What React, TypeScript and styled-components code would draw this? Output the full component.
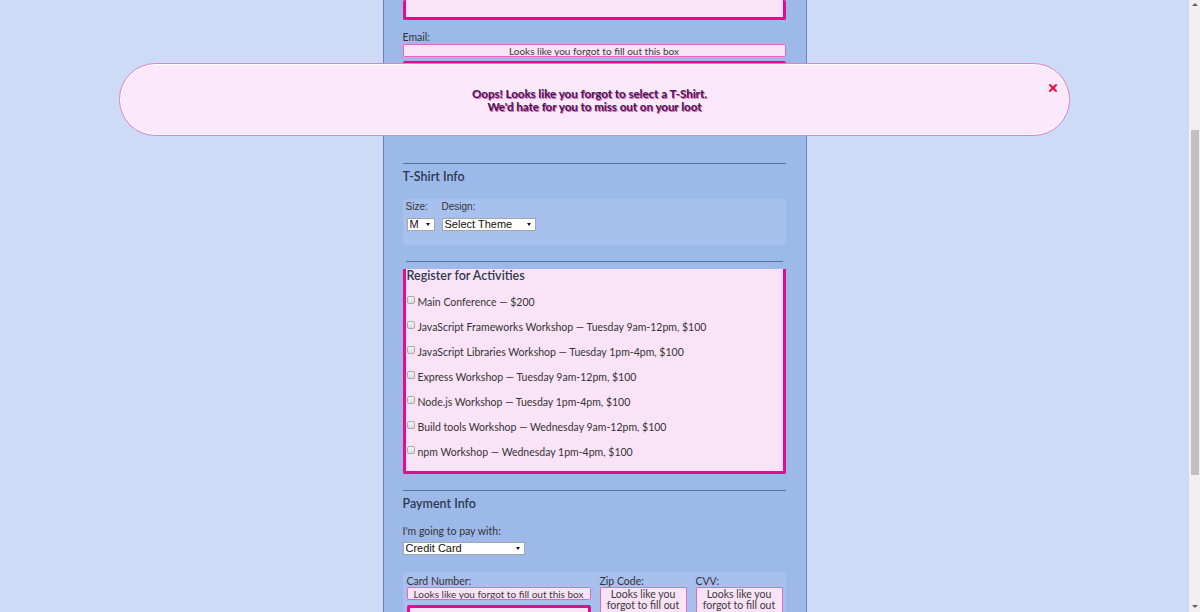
import React from "react";
import styled, { createGlobalStyle } from "styled-components";
import { X } from "lucide-react";

const Global = createGlobalStyle`
  html, body { margin: 0; padding: 0; height: 612px; overflow: hidden; }
  body { background: #cddbf6; font-family: "Lato", "Noto Sans", sans-serif; color: #333; }
  * { box-sizing: border-box; }
`;

const Page = styled.div`
  display: flex;
  height: 612px;
  width: 1200px;
`;

const Main = styled.main`
  position: relative;
  flex: 1;
  height: 100%;
  overflow: hidden;
`;

const ScrollTrack = styled.div`
  width: 11px;
  height: 100%;
  background: #f0f0f0;
  display: flex;
  flex-direction: column;
  align-items: center;
  padding-top: 3px;
`;

const ScrollArrow = styled.div<{ $down?: boolean }>`
  width: 0;
  height: 0;
  border-left: 3px solid transparent;
  border-right: 3px solid transparent;
  ${(p) => (p.$down ? "border-top: 3px solid #606060;" : "border-bottom: 3px solid #606060;")}
  ${(p) => (p.$down ? "margin-top: auto; margin-bottom: 4px;" : "")}
`;

const ScrollThumb = styled.div`
  width: 8px;
  height: 345px;
  margin-top: 124px;
  background: #c1c1c1;
`;

const Form = styled.form`
  width: 424px;
  height: 100%;
  margin: 0 auto;
  background: #9db9ea;
  border-left: 1px solid #6584b5;
  border-right: 1px solid #6584b5;
  padding: 0 20px 0 19px;
  display: flex;
  flex-direction: column;
  & > * { flex-shrink: 0; }
`;

const ErrorBox = styled.div<{ $h: number; $top?: boolean; $mt?: number }>`
  height: ${(p) => p.$h}px;
  margin-top: ${(p) => p.$mt ?? 0}px;
  background: #fbe3f7;
  border: 3px solid #ea0a8c;
  ${(p) => (p.$top ? "border-top: none;" : "")}
  border-radius: 2px;
  flex-shrink: 0;
`;

const Label = styled.label<{ $mt?: number; $lh?: number }>`
  display: block;
  font-size: 10.5px;
  line-height: ${(p) => p.$lh ?? 13}px;
  height: ${(p) => p.$lh ?? 13}px;
  color: #333;
  margin-top: ${(p) => p.$mt ?? 0}px;
  white-space: nowrap;
`;

const ErrorInput = styled.input`
  display: block;
  width: 100%;
  height: 13px;
  margin: 0;
  padding: 0;
  border: 1px solid #e46ab9;
  border-radius: 2px;
  background: #fbe3f7;
  font-family: "Lato", sans-serif;
  font-size: 10px;
  line-height: 11px;
  text-align: center;
  flex-shrink: 0;
  &::placeholder { color: #3a3a3a; opacity: 1; }
`;

const ErrorArea = styled.div`
  height: 30px;
  border: 1px solid #e46ab9;
  border-bottom: none;
  border-radius: 2px 2px 0 0;
  background: #fbe3f7;
  font-size: 10.5px;
  line-height: 11px;
  text-align: center;
  color: #3a3a3a;
  padding: 1px 2px 0;
  flex-shrink: 0;
`;

const Rule = styled.hr<{ $mt: number; $inset?: number }>`
  margin: ${(p) => p.$mt}px ${(p) => p.$inset ?? 0}px 0;
  border: none;
  border-top: 1px solid #53729f;
  height: 0;
`;

const Heading = styled.h3<{ $mt?: number }>`
  margin: ${(p) => p.$mt ?? 0}px 0 0;
  font-size: 12.5px;
  line-height: 16px;
  font-weight: 600;
  color: #2b3a4f;
`;

const Panel = styled.div<{ $mt: number; $h: number }>`
  margin-top: ${(p) => p.$mt}px;
  height: ${(p) => p.$h}px;
  background: #a8c0ee;
  border-radius: 3px;
  padding: 2px 3px 0 3px;
  display: flex;
  gap: 7px;
`;

const Field = styled.div<{ $w?: number }>`
  display: flex;
  flex-direction: column;
  ${(p) => (p.$w ? `width: ${p.$w}px;` : "")}
  flex-shrink: 0;
`;

const ArialLabel = styled.span`
  font-family: "Liberation Sans", Arial, sans-serif;
  font-size: 10px;
  line-height: 12px;
  color: #333;
`;

const SelectWrap = styled.div<{ $w: number; $mt?: number; $ml?: number }>`
  position: relative;
  width: ${(p) => p.$w}px;
  height: 13px;
  margin-top: ${(p) => p.$mt ?? 0}px;
  margin-left: ${(p) => p.$ml ?? 0}px;
  &::after {
    content: "";
    position: absolute;
    right: 5px;
    top: 5px;
    border-left: 2.5px solid transparent;
    border-right: 2.5px solid transparent;
    border-top: 3px solid #111;
    pointer-events: none;
  }
`;

const Select = styled.select`
  appearance: none;
  -webkit-appearance: none;
  display: block;
  width: 100%;
  height: 13px;
  margin: 0;
  padding: 0 0 0 2px;
  border: 1px solid #a6a6a6;
  border-radius: 0;
  background: #fff;
  font-family: "Liberation Sans", Arial, sans-serif;
  font-size: 11px;
  line-height: 11px;
  color: #111;
`;

const Activities = styled.fieldset`
  margin: 7px 0 0;
  height: 205px;
  background: #fbe3f7;
  border: 3px solid #ea0a8c;
  border-top: none;
  border-radius: 0 0 2px 2px;
  padding: 0 0 0 1px;
  min-width: 0;
`;

const ActHeading = styled.div`
  font-size: 12.5px;
  line-height: 13px;
  font-weight: 600;
  color: #2b3a4f;
`;

const ActList = styled.div`
  margin-top: 7px;
  display: flex;
  flex-direction: column;
`;

const ActRow = styled.label`
  display: flex;
  align-items: center;
  height: 25px;
  font-size: 10.5px;
  color: #333;
  gap: 3px;
`;

const Check = styled.span`
  width: 8px;
  height: 8px;
  margin-top: -4px;
  border: 1px solid #a9a9a9;
  border-radius: 2px;
  background: linear-gradient(#f4f4f4, #dcdcdc);
  flex-shrink: 0;
`;

const PayPanel = styled.div`
  margin-top: 17px;
  flex: 1;
  background: #a8c0ee;
  border-radius: 3px 3px 0 0;
  padding: 3px 3px 0 4px;
  display: flex;
  gap: 9px;
`;

const Modal = styled.div`
  position: absolute;
  top: 63px;
  left: 10%;
  width: 80%;
  height: 73px;
  border-radius: 37px;
  background: #fbe8fb;
  border: 1px solid #e67ccb;
  box-shadow: inset 0 0 0 1px #fff;
  display: flex;
  align-items: center;
  justify-content: center;
`;

const ModalText = styled.p`
  margin: 0;
  text-align: center;
  font-weight: 700;
  font-size: 11.5px;
  line-height: 13px;
  color: #3b1c4e;
  text-shadow: 1px 1px 0 #ef5ab6;
`;

const FirstLine = styled.span`
  padding-right: 10px;
`;

const Close = styled.button`
  position: absolute;
  top: 18px;
  right: 10px;
  width: 12px;
  height: 12px;
  padding: 0;
  border: none;
  background: none;
  display: flex;
  color: #f20a3a;
`;

const activities = [
  "Main Conference — $200",
  "JavaScript Frameworks Workshop — Tuesday 9am-12pm, $100",
  "JavaScript Libraries Workshop — Tuesday 1pm-4pm, $100",
  "Express Workshop — Tuesday 9am-12pm, $100",
  "Node.js Workshop — Tuesday 1pm-4pm, $100",
  "Build tools Workshop — Wednesday 9am-12pm, $100",
  "npm Workshop — Wednesday 1pm-4pm, $100",
];

const PH = "Looks like you forgot to fill out this box";

export default function App() {
  return (
    <Page>
      <Global />
      <Main>
        <Form onSubmit={(e) => e.preventDefault()}>
          <ErrorBox $h={20} $top />
          <Label $mt={11}>Email:</Label>
          <ErrorInput placeholder={PH} />
          <ErrorBox $h={60} $mt={4} />
          <Rule $mt={42} />
          <Heading $mt={5}>T-Shirt Info</Heading>
          <Panel $mt={14} $h={46}>
            <Field>
              <ArialLabel>Size:</ArialLabel>
              <SelectWrap $w={28} $mt={5} $ml={1}>
                <Select defaultValue="M">
                  <option>S</option>
                  <option>M</option>
                  <option>L</option>
                </Select>
              </SelectWrap>
            </Field>
            <Field>
              <ArialLabel>Design:</ArialLabel>
              <SelectWrap $w={94} $mt={5}>
                <Select defaultValue="Select Theme">
                  <option>Select Theme</option>
                </Select>
              </SelectWrap>
            </Field>
          </Panel>
          <Rule $mt={16} $inset={3} />
          <Activities>
            <ActHeading>Register for Activities</ActHeading>
            <ActList>
              {activities.map((a) => (
                <ActRow key={a}>
                  <Check role="checkbox" aria-checked="false" />
                  <span>{a}</span>
                </ActRow>
              ))}
            </ActList>
          </Activities>
          <Rule $mt={16} />
          <Heading $mt={5}>Payment Info</Heading>
          <Label $mt={12} $lh={14}>I'm going to pay with:</Label>
          <SelectWrap $w={122} $mt={4}>
            <Select defaultValue="Credit Card">
              <option>Credit Card</option>
            </Select>
          </SelectWrap>
          <PayPanel>
            <Field $w={184}>
              <Label $lh={12}>Card Number:</Label>
              <ErrorInput placeholder={PH} />
              <ErrorBox $h={20} $mt={5} />
            </Field>
            <Field $w={87}>
              <Label $lh={12}>Zip Code:</Label>
              <ErrorArea>Looks like you forgot to fill out</ErrorArea>
            </Field>
            <Field $w={87}>
              <Label $lh={12}>CVV:</Label>
              <ErrorArea>Looks like you forgot to fill out</ErrorArea>
            </Field>
          </PayPanel>
        </Form>
        <Modal role="alert">
          <ModalText>
            <FirstLine>Oops! Looks like you forgot to select a T-Shirt.</FirstLine>
            <br />
            We'd hate for you to miss out on your loot
          </ModalText>
          <Close type="button" aria-label="Close">
            <X size={12} strokeWidth={4} />
          </Close>
        </Modal>
      </Main>
      <ScrollTrack>
        <ScrollArrow />
        <ScrollThumb />
        <ScrollArrow $down />
      </ScrollTrack>
    </Page>
  );
}
